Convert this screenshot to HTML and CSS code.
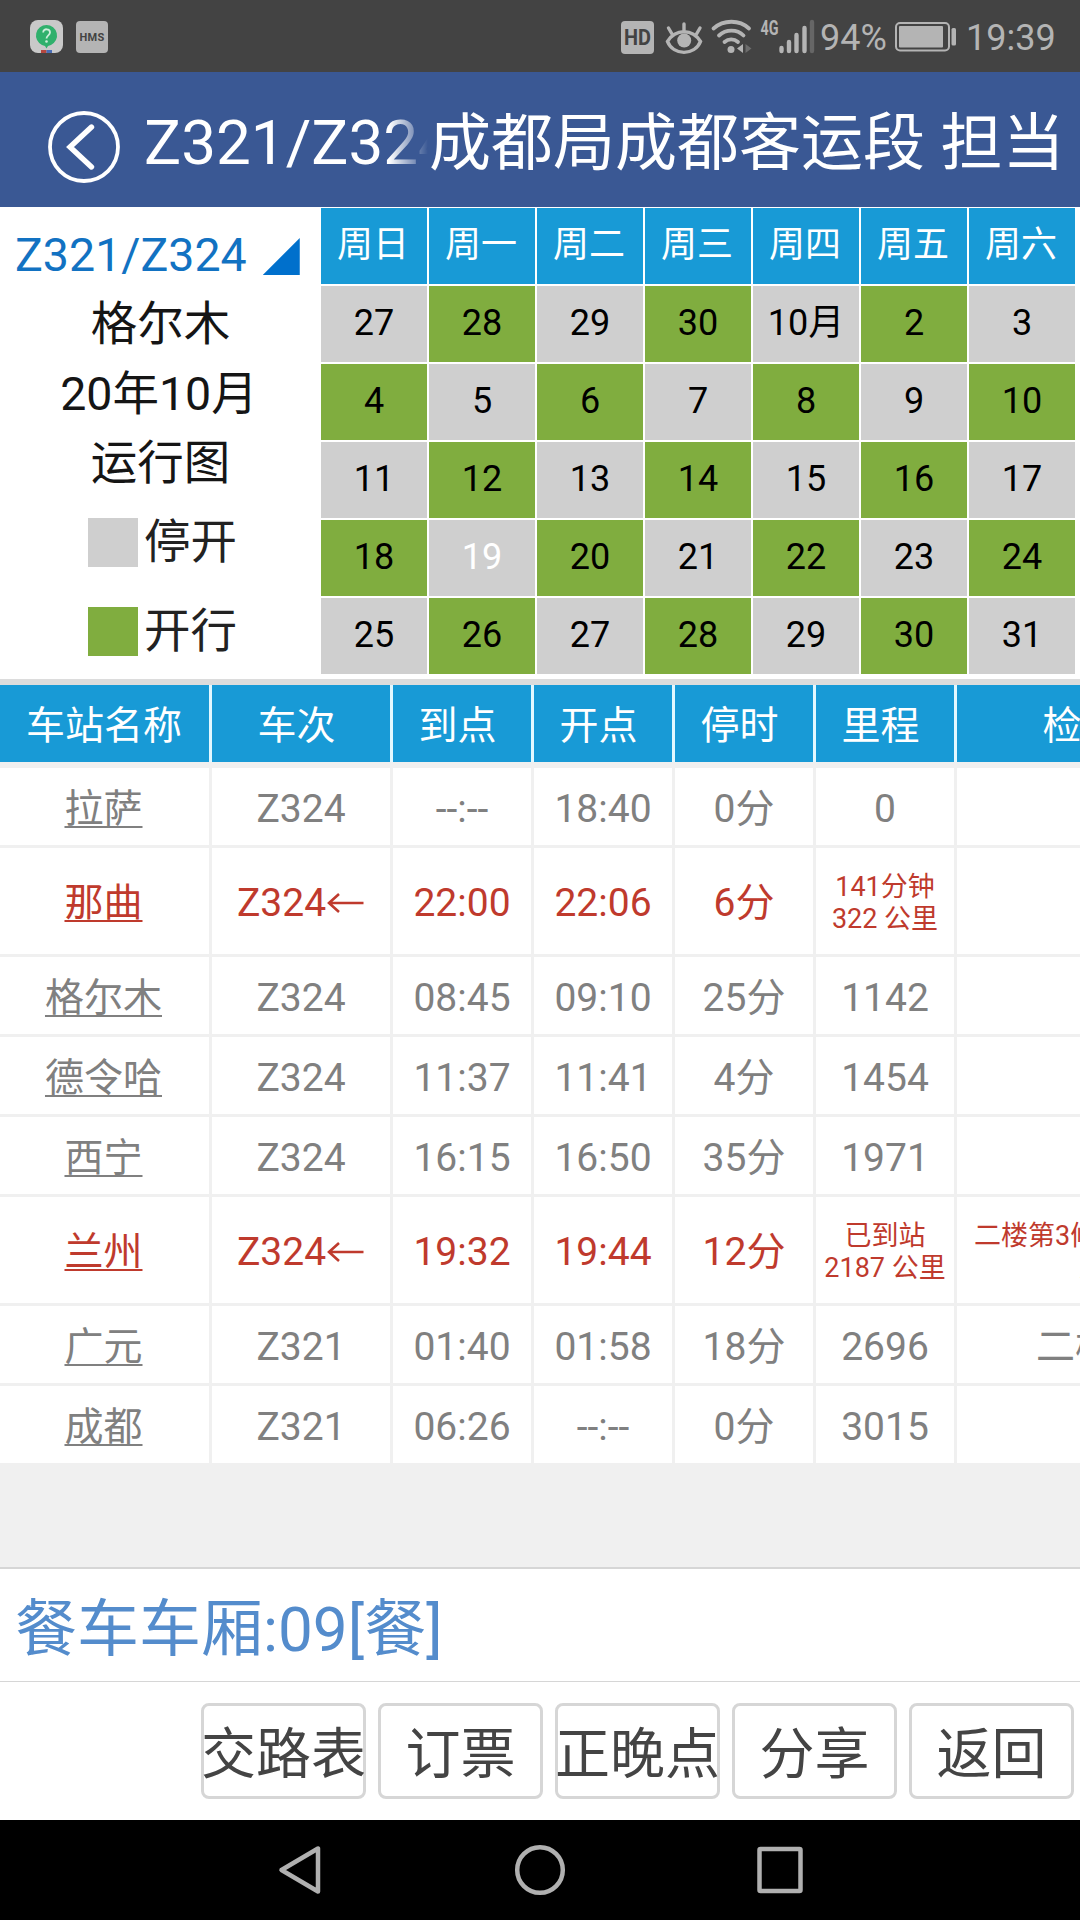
FILE: index.html
```html
<!DOCTYPE html>
<html lang="zh-CN">
<head>
    <meta charset="UTF-8">
    <meta name="viewport" content="width=device-width, initial-scale=1.0">
    <title>Z321/Z324</title>
    <link rel="stylesheet" href="styles.css">
</head>
<body>
    <div class="status">
        <svg class="app-icon" width="33" height="33" viewBox="0 0 33 33">
            <rect width="33" height="33" rx="8" fill="#c9c9c9"/>
            <path d="M11 30h5.500v3h-5.500z" fill="#b5473f"/>
            <path d="M16.500 30h5.500v3h-5.500z" fill="#4a6db5"/>
            <path d="M16.500 5a10.500 10.500 0 0 1 4.500 20l-3 1-1.500 2.500-1.500-2.500-3-1a10.500 10.500 0 0 1 4.500-20z" fill="#2fb06c"/>
            <path d="M13.200 12.500c0-4.400 6.800-4.200 6.800 0 0 2.800-3.500 3-3.500 6" fill="none" stroke="#cdeedb" stroke-width="1.800"/>
            <circle cx="16.500" cy="21.500" r="1.300" fill="#cdeedb"/>
        </svg>
        <span class="hms">HMS</span>
        <div class="status-right">
            <svg width="264" height="36" viewBox="0 0 264 36">
                <rect x="0" y="2" width="33" height="33" rx="4" fill="#b4b4b4"/>
                <text x="3" y="26" class="hd" textLength="27" lengthAdjust="spacingAndGlyphs">HD</text>
                <!-- eye -->
                <g fill="none" stroke="#b4b4b4" stroke-width="3.400" stroke-linecap="round">
                    <path d="M46.500 22.500c8-13 25-13 33 0-6 14.500-27 14.500-33 0z"/>
                    <path d="M63 5v6M47.500 9l3.500 6M79 9l-3.500 6"/>
                </g>
                <circle cx="63.200" cy="21.500" r="7" fill="#b4b4b4"/>
                <!-- wifi -->
                <g fill="none" stroke="#b4b4b4" stroke-width="3.800" stroke-linecap="round">
                    <path d="M92.500 9.500c10-9 26-9 35.500 0"/>
                    <path d="M98 16.500c7-6.500 18-6.500 24.500 0"/>
                    <path d="M103.500 23c4-3.500 9.500-3.500 13.500 0"/>
                </g>
                <circle cx="110" cy="30.500" r="3.500" fill="#b4b4b4"/>
                <path d="M122 25v9l-6-4.500z" fill="#b4b4b4"/>
                <path d="M124.500 25v9l6-4.500z" fill="#6d6d6d"/>
                <text x="139.500" y="16" class="net" textLength="18" lengthAdjust="spacingAndGlyphs">4G</text>
                <!-- signal -->
                <g stroke-width="4.400" stroke-linecap="round" stroke="#b4b4b4">
                    <path d="M160.500 29v3M168 23v9M175.500 16v16M183.500 9v23"/>
                    <path d="M191 3v29" stroke="#666"/>
                </g>
            </svg>
            <span class="percent">94%</span>
            <svg class="battery" width="62" height="30" viewBox="0 0 62 30">
                <rect x="1" y="1" width="53" height="27.500" rx="4" fill="none" stroke="#b4b4b4" stroke-width="2"/>
                <rect x="4" y="4" width="44" height="21.500" rx="1" fill="#b4b4b4"/>
                <rect x="56.500" y="6" width="4.500" height="17.500" rx="1.500" fill="#b4b4b4"/>
            </svg>
            <span class="time">19:39</span>
        </div>
    </div>

    <div class="header">
        <svg class="back" width="72" height="72" viewBox="0 0 72 72" fill="none" stroke="#fff">
            <circle cx="36" cy="36" r="34" stroke-width="3.800"/>
            <path d="M43.500 16L22 36l21.500 20" stroke-width="5.400" stroke-linecap="round"/>
        </svg>
        <div class="train">Z321/Z324</div>
        <div class="bureau">成都局成都客运段 担当</div>
    </div>

    <div class="top">
        <div class="info">
            <div class="info-train">Z321/Z324<i class="tri"></i></div>
            <p>格尔木</p>
            <p class="month">20年10月</p>
            <p>运行图</p>
            <div class="legend"><i></i>停开</div>
            <div class="legend run"><i></i>开行</div>
        </div>
        <div class="calendar">
            <b>周日</b><b>周一</b><b>周二</b><b>周三</b><b>周四</b><b>周五</b><b>周六</b>
            <span>27</span><span class="on">28</span><span>29</span><span class="on">30</span><span>10月</span><span class="on">2</span><span>3</span>
            <span class="on">4</span><span>5</span><span class="on">6</span><span>7</span><span class="on">8</span><span>9</span><span class="on">10</span>
            <span>11</span><span class="on">12</span><span>13</span><span class="on">14</span><span>15</span><span class="on">16</span><span>17</span>
            <span class="on">18</span><span class="today">19</span><span class="on">20</span><span>21</span><span class="on">22</span><span>23</span><span class="on">24</span>
            <span>25</span><span class="on">26</span><span>27</span><span class="on">28</span><span>29</span><span class="on">30</span><span>31</span>
        </div>
    </div>

    <div class="stations">
        <div class="row head">
            <div>车站名称</div><div>车次</div><div>到点</div><div>开点</div><div>停时</div><div>里程</div><div>检票口</div>
        </div>
        <div class="row">
            <div><u>拉萨</u></div><div>Z324</div><div>--:--</div><div>18:40</div><div>0分</div><div>0</div><div></div>
        </div>
        <div class="row red">
            <div><u>那曲</u></div><div>Z324<svg class="arrow" width="39" height="22" viewBox="0 0 39 22"><path d="M37.500 11H3M13 2L3 11l10 9"/></svg></div><div>22:00</div><div>22:06</div><div>6分</div><div class="small">141分钟<br>322 公里</div><div></div>
        </div>
        <div class="row">
            <div><u>格尔木</u></div><div>Z324</div><div>08:45</div><div>09:10</div><div>25分</div><div>1142</div><div></div>
        </div>
        <div class="row">
            <div><u>德令哈</u></div><div>Z324</div><div>11:37</div><div>11:41</div><div>4分</div><div>1454</div><div></div>
        </div>
        <div class="row">
            <div><u>西宁</u></div><div>Z324</div><div>16:15</div><div>16:50</div><div>35分</div><div>1971</div><div></div>
        </div>
        <div class="row red">
            <div><u>兰州</u></div><div>Z324<svg class="arrow" width="39" height="22" viewBox="0 0 39 22"><path d="M37.500 11H3M13 2L3 11l10 9"/></svg></div><div>19:32</div><div>19:44</div><div>12分</div><div class="small">已到站<br>2187 公里</div><div class="small gate"><span>二楼第3候车室</span><span class="door">入口</span></div>
        </div>
        <div class="row">
            <div><u>广元</u></div><div>Z321</div><div>01:40</div><div>01:58</div><div>18分</div><div>2696</div><div>二楼2口</div>
        </div>
        <div class="row">
            <div><u>成都</u></div><div>Z321</div><div>06:26</div><div>--:--</div><div>0分</div><div>3015</div><div></div>
        </div>
    </div>

    <div class="dining">餐车车厢:09[餐]</div>

    <div class="buttons">
        <button>交路表</button>
        <button>订票</button>
        <button>正晚点</button>
        <button>分享</button>
        <button>返回</button>
    </div>

    <div class="nav">
        <svg width="50" height="54" viewBox="0 0 50 54"><path d="M42 5.500v43L5.500 27z"/></svg>
        <svg width="54" height="54" viewBox="0 0 54 54"><circle cx="26" cy="27" r="22.800"/></svg>
        <svg width="50" height="54" viewBox="0 0 50 54"><rect x="4.500" y="6" width="41" height="42" rx="1"/></svg>
    </div>
</body>
</html>
```

FILE: styles.css
```css
*{
    margin: 0;
    padding: 0;
    box-sizing: border-box;
}
body{
    width: 1080px;
    height: 1920px;
    overflow: hidden;
    background-color: #f0f0f0;
    font-family: Roboto, "Noto Sans CJK SC", sans-serif;
    display: flex;
    flex-direction: column;
}
svg{
    display: block;
    flex: none;
}

/* status bar */
.status{
    height: 72px;
    flex: none;
    background-color: #434343;
    color: #b4b4b4;
    display: flex;
    align-items: center;
    padding: 1px 23px 0 30px;
}
.hms{
    width: 32px;
    height: 32px;
    margin-left: 13px;
    border-radius: 4px;
    background-color: #b4b4b4;
    color: #434343;
    font-size: 11px;
    font-weight: bold;
    line-height: 33px;
    text-align: center;
    letter-spacing: 0.3px;
}
.status-right{
    display: flex;
    align-items: center;
    margin-left: auto;
    font-size: 36px;
    line-height: 36px;
}
.status-right text{
    font-family: Roboto, sans-serif;
    font-weight: bold;
}
.hd{
    font-size: 22px;
    fill: #434343;
}
.net{
    font-size: 21px;
    fill: #b4b4b4;
}
.percent,
.time{
    padding-top: 2px;
}
.status-right .percent{
    width: 75px;
    margin-left: -66px;
}
.status-right svg:first-child{
    margin-right: 1px;
}
.time{
    width: 91px;
    margin-left: 9px;
}

/* title bar */
.header{
    height: 135px;
    flex: none;
    background-color: #3a5894;
    color: #fff;
    display: flex;
    padding: 39px 0 0 48px;
    font-size: 62px;
    line-height: 64px;
    white-space: nowrap;
}
.train{
    width: 285px;
    margin-left: 24px;
    overflow: hidden;
    -webkit-mask-image: linear-gradient(to right, #000 245px, transparent 284px);
    mask-image: linear-gradient(to right, #000 245px, transparent 284px);
}
.bureau{
    padding-top: 1px;
}

/* calendar block */
.top{
    height: 478px;
    flex: none;
    display: flex;
    background-color: #fff;
    border-bottom: 6px solid #dcdcdc;
}
.info{
    width: 321px;
    padding-top: 14px;
    font-size: 46.5px;
    line-height: 69px;
    color: #151515;
}
.info-train{
    display: flex;
    padding-left: 15px;
    color: #1272c2;
}
.tri{
    width: 37px;
    height: 37px;
    margin: 17px 0 0 16px;
    background-color: #0070cc;
    clip-path: polygon(100% 0, 100% 100%, 0 100%);
}
.info p{
    text-align: center;
}
.info .month{
    padding-right: 3px;
    line-height: 70px;
}
.legend{
    display: flex;
    align-items: center;
    height: 89px;
    padding-left: 88px;
    color: #222;
}
.legend i{
    width: 50px;
    height: 49px;
    margin-right: 6px;
    background-color: #cfcfcf;
}
.legend.run i{
    background-color: #80ad3f;
}
.calendar{
    display: grid;
    grid-template-columns: repeat(7, 106px);
    grid-template-rows: repeat(6, 76px);
    gap: 2px;
    padding-top: 1px;
    font-size: 36px;
    line-height: 75px;
    text-align: center;
    color: #000;
}
.calendar b{
    padding-right: 2px;
    font-weight: normal;
    background-color: #189ad6;
    color: #fff;
}
.calendar span{
    background-color: #cfcfcf;
}
.calendar .on{
    background-color: #80ad3f;
}
.calendar .today{
    color: #fff;
}

/* station list */
.stations{
    flex: 1;
    overflow: hidden;
    font-size: 39px;
    line-height: 46px;
    color: #808080;
}
.row{
    display: grid;
    grid-template-columns: 209px 178px repeat(4, 138px) 297px;
    column-gap: 3px;
    width: 1254px;
    height: 77px;
    margin-bottom: 3px;
}
.row > div{
    display: flex;
    align-items: center;
    justify-content: center;
    padding-top: 4px;
    background-color: #fff;
    white-space: nowrap;
}
.row > div:first-child{
    padding-right: 2px;
}
.row u{
    text-decoration-thickness: 2px;
    text-underline-offset: 4px;
}
.head{
    margin-bottom: 6px;
    background-color: #e2f8ff;
    color: #fff;
}
.row.head > div{
    padding-top: 5px;
    padding-right: 9px;
    background-color: #189ad6;
}
.row.head > div:first-child{
    padding-right: 1px;
}
.red{
    height: 106px;
    color: #bf3a2d;
}
.arrow{
    fill: none;
    stroke: #bf3a2d;
    stroke-width: 2.6;
}
.row .small{
    padding-top: 3px;
    font-size: 27px;
    line-height: 32px;
    text-align: center;
}
.row .gate{
    flex-direction: column;
    align-items: flex-start;
    padding-left: 17px;
}
.gate .door{
    padding-left: 105px;
}

/* footer */
.dining{
    height: 115px;
    flex: none;
    padding: 13px 0 0 15px;
    background-color: #fff;
    border-top: 2px solid #d6d6d6;
    border-bottom: 1px solid #d6d6d6;
    font-size: 62px;
    line-height: 96px;
    color: #548ccc;
}
.buttons{
    height: 138px;
    flex: none;
    display: flex;
    justify-content: flex-end;
    gap: 12px;
    padding: 21px 6px 0 0;
    background-color: #fff;
}
.buttons button{
    width: 165px;
    height: 96px;
    padding-top: 8px;
    border: 3px solid #d6d6d6;
    border-radius: 8px;
    background-color: #fff;
    font-family: inherit;
    font-size: 55px;
    line-height: 80px;
    color: #444;
    display: flex;
    justify-content: center;
    white-space: nowrap;
}
.nav{
    height: 100px;
    flex: none;
    background-color: #000;
    display: flex;
    align-items: center;
    justify-content: space-between;
    padding: 0 275px 0 276px;
}
.nav svg{
    fill: none;
    stroke: #b0b0b0;
    stroke-width: 4.5;
    stroke-linejoin: round;
}
```
